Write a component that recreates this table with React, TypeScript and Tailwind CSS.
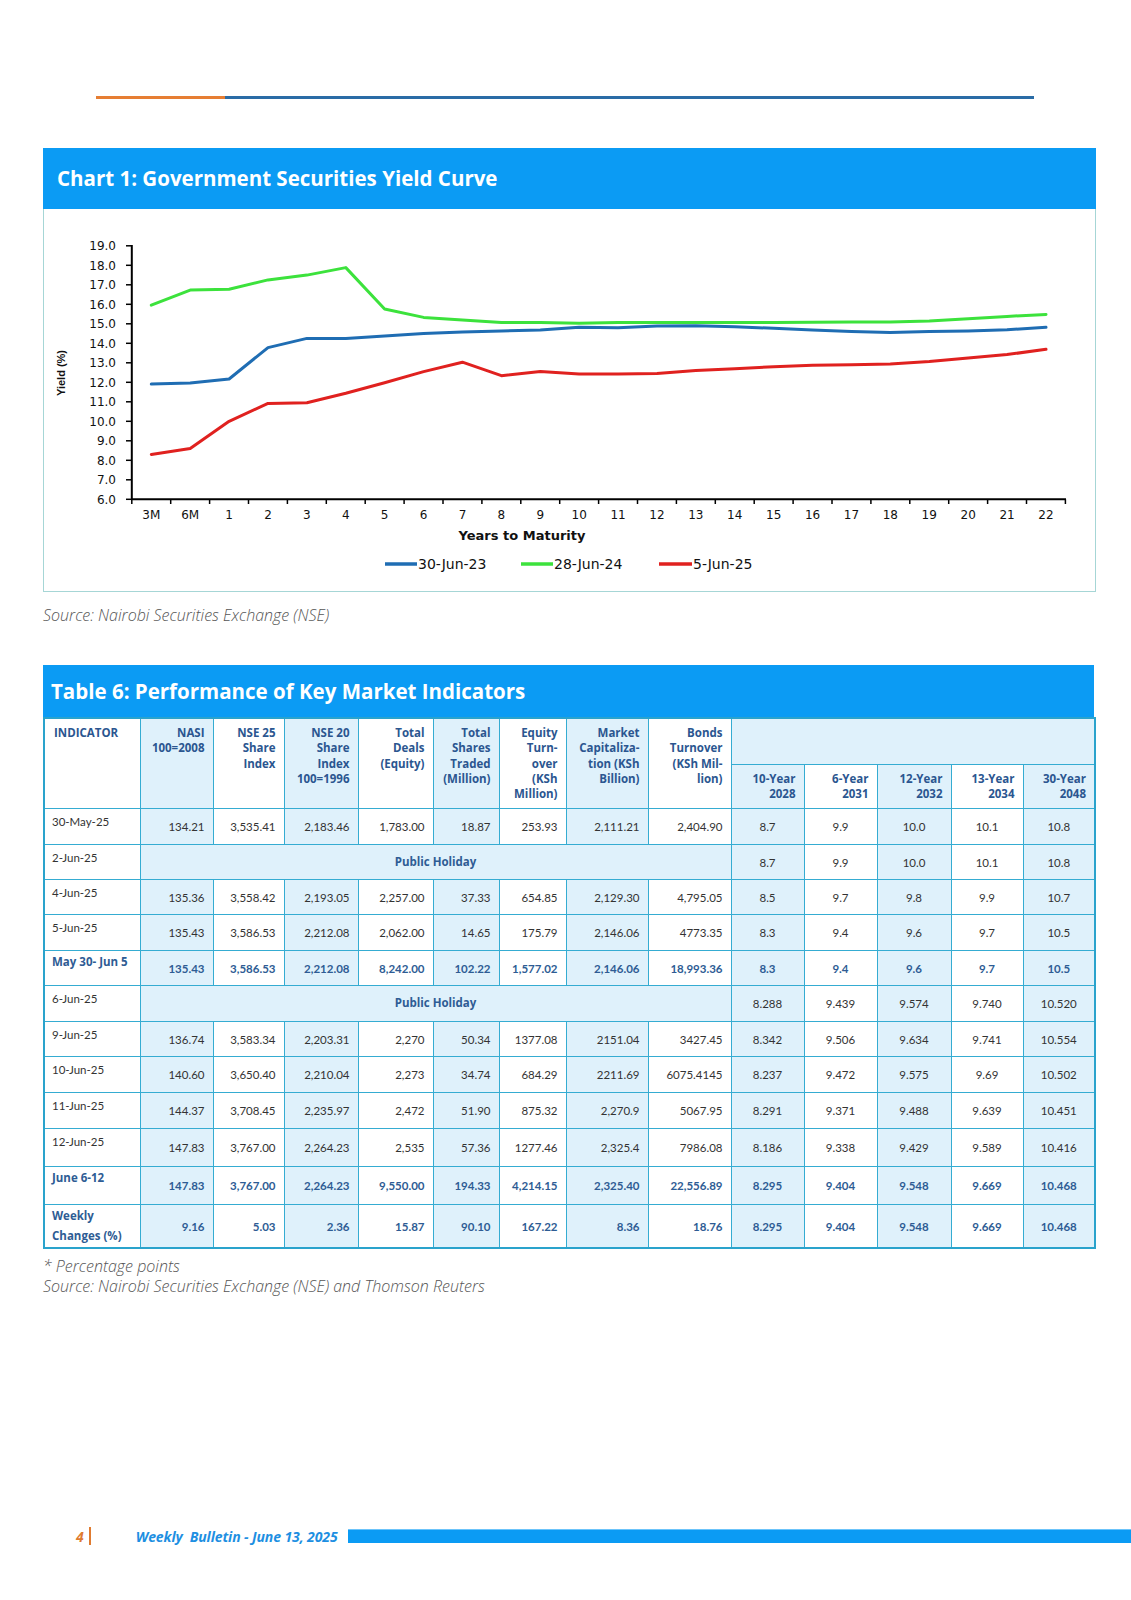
import { FC } from "react";

const cats = ["3M", "6M", ...Array.from({ length: 22 }, (_, i) => String(i + 1))];

const blue = [11.91, 11.96, 12.17, 13.78, 14.25, 14.25, 14.37, 14.5, 14.58, 14.63, 14.68, 14.82, 14.8, 14.88, 14.9, 14.85, 14.77, 14.68, 14.6, 14.55, 14.6, 14.63, 14.7, 14.82];
const green = [15.96, 16.73, 16.77, 17.25, 17.5, 17.88, 15.76, 15.33, 15.2, 15.06, 15.06, 15.03, 15.06, 15.06, 15.06, 15.07, 15.06, 15.08, 15.1, 15.1, 15.15, 15.26, 15.38, 15.48];
const red = [8.3, 8.6, 10.0, 10.92, 10.95, 11.44, 11.98, 12.55, 13.03, 12.34, 12.55, 12.43, 12.43, 12.45, 12.6, 12.7, 12.8, 12.87, 12.9, 12.94, 13.06, 13.25, 13.42, 13.69];

const px = (i: number) => 131.8 + 38.9 * (i + 0.5);
const py = (v: number) => 499.3 - (v - 6) * 19.5;
const pts = (arr: number[]) => arr.map((v, i) => `${px(i).toFixed(1)},${py(v).toFixed(1)}`).join(" ");

const YieldChart: FC = () => {
    const yTicks = Array.from({ length: 14 }, (_, i) => 6 + i);
    return (
        <svg width={1051} height={382} viewBox="44 209 1051 382" className="block" style={{ fontFamily: "'DejaVu Sans', sans-serif" }}>
            {yTicks.map((v) => (
                <g key={v}>
                    <line x1={126} x2={131.8} y1={py(v)} y2={py(v)} stroke="#000" strokeWidth={1.5} />
                    <text x={116} y={py(v)} dy="0.36em" textAnchor="end" fontSize={12} fill="#111">
                        {v.toFixed(1)}
                    </text>
                </g>
            ))}
            {Array.from({ length: 25 }, (_, k) => (
                <line key={k} x1={131.8 + 38.9 * k} x2={131.8 + 38.9 * k} y1={499.3} y2={504} stroke="#000" strokeWidth={1.5} />
            ))}
            <line x1={131.8} x2={131.8} y1={245} y2={500} stroke="#000" strokeWidth={2} />
            <line x1={131} x2={1066} y1={499.3} y2={499.3} stroke="#000" strokeWidth={2} />
            {cats.map((c, i) => (
                <text key={c} x={px(i)} y={515} dy="0.36em" textAnchor="middle" fontSize={12} fill="#111">
                    {c}
                </text>
            ))}
            <text x={522} y={535} dy="0.36em" textAnchor="middle" fontSize={13} fontWeight={700} fill="#111">
                Years to Maturity
            </text>
            <text
                x={61}
                y={373}
                dy="0.36em"
                textAnchor="middle"
                fontSize={11}
                fontWeight={700}
                fill="#111"
                transform="rotate(-90 61 373)"
                style={{ fontFamily: "'Liberation Sans', sans-serif" }}
            >
                Yield (%)
            </text>
            <polyline points={pts(green)} fill="none" stroke="#3ce23c" strokeWidth={3} strokeLinejoin="round" strokeLinecap="round" />
            <polyline points={pts(blue)} fill="none" stroke="#1f6db3" strokeWidth={3} strokeLinejoin="round" strokeLinecap="round" />
            <polyline points={pts(red)} fill="none" stroke="#e0211f" strokeWidth={3} strokeLinejoin="round" strokeLinecap="round" />

            <line x1={385} x2={417} y1={564} y2={564} stroke="#1f6db3" strokeWidth={3.5} />
            <text x={418} y={564} dy="0.36em" fontSize={14} fill="#111">30-Jun-23</text>
            <line x1={521} x2={553} y1={564} y2={564} stroke="#3ce23c" strokeWidth={3.5} />
            <text x={554} y={564} dy="0.36em" fontSize={14} fill="#111">28-Jun-24</text>
            <line x1={659} x2={692} y1={564} y2={564} stroke="#e0211f" strokeWidth={3.5} />
            <text x={693} y={564} dy="0.36em" fontSize={14} fill="#111">5-Jun-25</text>
        </svg>
    );
};

interface Row {
    label: string;
    vals?: string[];
    bonds: string[];
    h: string;
    bold?: boolean;
}

const rows: Row[] = [
    { label: "30-May-25", vals: ["134.21", "3,535.41", "2,183.46", "1,783.00", "18.87", "253.93", "2,111.21", "2,404.90"], bonds: ["8.7", "9.9", "10.0", "10.1", "10.8"], h: "h-[36px]" },
    { label: "2-Jun-25", bonds: ["8.7", "9.9", "10.0", "10.1", "10.8"], h: "h-[35px]" },
    { label: "4-Jun-25", vals: ["135.36", "3,558.42", "2,193.05", "2,257.00", "37.33", "654.85", "2,129.30", "4,795.05"], bonds: ["8.5", "9.7", "9.8", "9.9", "10.7"], h: "h-[35px]" },
    { label: "5-Jun-25", vals: ["135.43", "3,586.53", "2,212.08", "2,062.00", "14.65", "175.79", "2,146.06", "4773.35"], bonds: ["8.3", "9.4", "9.6", "9.7", "10.5"], h: "h-[36px]" },
    { label: "May 30- Jun 5", bold: true, vals: ["135.43", "3,586.53", "2,212.08", "8,242.00", "102.22", "1,577.02", "2,146.06", "18,993.36"], bonds: ["8.3", "9.4", "9.6", "9.7", "10.5"], h: "h-[35px]" },
    { label: "6-Jun-25", bonds: ["8.288", "9.439", "9.574", "9.740", "10.520"], h: "h-[36px]" },
    { label: "9-Jun-25", vals: ["136.74", "3,583.34", "2,203.31", "2,270", "50.34", "1377.08", "2151.04", "3427.45"], bonds: ["8.342", "9.506", "9.634", "9.741", "10.554"], h: "h-[35px]" },
    { label: "10-Jun-25", vals: ["140.60", "3,650.40", "2,210.04", "2,273", "34.74", "684.29", "2211.69", "6075.4145"], bonds: ["8.237", "9.472", "9.575", "9.69", "10.502"], h: "h-[36px]" },
    { label: "11-Jun-25", vals: ["144.37", "3,708.45", "2,235.97", "2,472", "51.90", "875.32", "2,270.9", "5067.95"], bonds: ["8.291", "9.371", "9.488", "9.639", "10.451"], h: "h-[36px]" },
    { label: "12-Jun-25", vals: ["147.83", "3,767.00", "2,264.23", "2,535", "57.36", "1277.46", "2,325.4", "7986.08"], bonds: ["8.186", "9.338", "9.429", "9.589", "10.416"], h: "h-[38px]" },
    { label: "June 6-12", bold: true, vals: ["147.83", "3,767.00", "2,264.23", "9,550.00", "194.33", "4,214.15", "2,325.40", "22,556.89"], bonds: ["8.295", "9.404", "9.548", "9.669", "10.468"], h: "h-[38px]" },
    { label: "Weekly Changes (%)", bold: true, vals: ["9.16", "5.03", "2.36", "15.87", "90.10", "167.22", "8.36", "18.76"], bonds: ["8.295", "9.404", "9.548", "9.669", "10.468"], h: "h-[44px]" },
];

const heads = [
    ["NASI", "100=2008"],
    ["NSE 25", "Share", "Index"],
    ["NSE 20", "Share", "Index", "100=1996"],
    ["Total", "Deals", "(Equity)"],
    ["Total", "Shares", "Traded", "(Million)"],
    ["Equity", "Turn-", "over", "(KSh", "Million)"],
    ["Market", "Capitaliza-", "tion (KSh", "Billion)"],
    ["Bonds", "Turnover", "(KSh Mil-", "lion)"],
];

const bondHeads = [
    ["10-Year", "2028"],
    ["6-Year", "2031"],
    ["12-Year", "2032"],
    ["13-Year", "2034"],
    ["30-Year", "2048"],
];

const colW = ["w-[96px]", "w-[73px]", "w-[71px]", "w-[74px]", "w-[75px]", "w-[66px]", "w-[67px]", "w-[82px]", "w-[83px]", "w-[73px]", "w-[73px]", "w-[74px]", "w-[72px]", "w-[72px]"];

const light = "bg-[#dff1fb]";
const bd = "border border-[#35acd2]";
const headTxt = "font-['Open_Sans',sans-serif] font-bold text-[11.5px] text-[#2b5690] leading-[15.3px]";
const boldLbl = "font-['Open_Sans',sans-serif] font-bold text-[11.5px] text-[#2e5c94]";

const MarketTable: FC = () => (
    <table className="table-fixed border-collapse w-[1051px] text-[11.5px] font-['Lato',sans-serif] border-2 border-[#2aa3cc]">
        <colgroup>
            {colW.map((w, i) => (
                <col key={i} className={w} />
            ))}
        </colgroup>
        <thead>
            <tr className="h-[46px]">
                <td rowSpan={2} className={`${bd} bg-white align-top pl-[9px] pt-[6px] ${headTxt}`}>INDICATOR</td>
                {heads.map((lines, i) => (
                    <td key={i} rowSpan={2} className={`${bd} ${i % 2 === 0 ? light : "bg-white"} align-top text-right pr-[8px] pt-[6px] ${headTxt}`}>
                        {lines.map((l) => (
                            <div key={l}>{l}</div>
                        ))}
                    </td>
                ))}
                <td colSpan={5} className={`${bd} ${light}`} />
            </tr>
            <tr className="h-[44px]">
                {bondHeads.map((lines, i) => (
                    <td key={i} className={`${bd} ${i % 2 === 0 ? light : "bg-white"} align-top text-right pr-[8px] pt-[6px] ${headTxt}`}>
                        {lines.map((l) => (
                            <div key={l}>{l}</div>
                        ))}
                    </td>
                ))}
            </tr>
        </thead>
        <tbody>
            {rows.map((r) => {
                const tone = r.bold ? "font-bold text-[#2e5c94]" : "text-[#333]";
                return (
                    <tr key={r.label} className={r.h}>
                        <td className={`${bd} bg-white align-top pl-[7px] ${r.bold ? `${boldLbl} leading-[20px] pt-[1px]` : "text-[#333] pt-[4px]"}`}>
                            {r.label === "Weekly Changes (%)" ? (
                                <>
                                    <div>Weekly</div>
                                    <div>Changes (%)</div>
                                </>
                            ) : (
                                r.label
                            )}
                        </td>
                        {r.vals ? (
                            r.vals.map((v, i) => (
                                <td key={i} className={`${bd} ${i % 2 === 0 ? light : "bg-white"} text-right pr-[8px] pt-[2px] ${tone}`}>
                                    {v}
                                </td>
                            ))
                        ) : (
                            <td colSpan={8} className={`${bd} ${light} text-center ${boldLbl}`}>
                                Public Holiday
                            </td>
                        )}
                        {r.bonds.map((v, i) => (
                            <td key={i} className={`${bd} ${i % 2 === 0 ? light : "bg-white"} text-center pt-[2px] ${tone}`}>
                                {v}
                            </td>
                        ))}
                    </tr>
                );
            })}
        </tbody>
    </table>
);

export default function App() {
    return (
        <div className="w-[1131px] h-[1600px] bg-white flex flex-col font-['Open_Sans',sans-serif]">
            <div className="mt-[96px] ml-[96px] w-[938px] h-[3px] flex">
                <div className="w-[129px] bg-[#e67e33]" />
                <div className="flex-1 bg-[#2a6ca6]" />
            </div>

            <div className="mt-[49px] ml-[43px] w-[1053px]">
                <div className="h-[61px] bg-[#0b9bf4] flex items-center pl-[14px]">
                    <h2 className="text-white font-bold text-[20.5px] leading-none">Chart 1: Government Securities Yield Curve</h2>
                </div>
                <div className="h-[383px] border border-t-0 border-[#a6d6d6]">
                    <YieldChart />
                </div>
            </div>

            <p className="ml-[43px] mt-[13px] leading-[20px] text-[16px] italic font-light text-[#555]">Source: Nairobi Securities Exchange (NSE)</p>

            <div className="mt-[40px] ml-[43px] w-[1051px]">
                <div className="h-[52px] bg-[#0b9bf4] flex items-center pl-[8px]">
                    <h2 className="text-white font-bold text-[20.5px] leading-none">Table 6: Performance of Key Market Indicators</h2>
                </div>
                <MarketTable />
            </div>

            <div className="ml-[43px] mt-[7px] text-[16px] leading-[20px] italic font-light text-[#555]">
                <p>* Percentage points</p>
                <p>Source: Nairobi Securities Exchange (NSE) and Thomson Reuters</p>
            </div>

            <div className="mt-auto mb-[54px] h-[20px] flex items-center">
                <span className="ml-[76px] text-[14px] font-bold italic text-[#e07b30]">4</span>
                <span className="ml-[5px] w-[2px] h-[18px] bg-[#e07b30]" />
                <span className="ml-[45px] text-[14px] font-bold italic text-[#1d8fe2] whitespace-pre tracking-[-0.1px]">Weekly  Bulletin - June 13, 2025</span>
                <div className="ml-auto w-[783px] h-[14px] bg-[#0b9bf4] border-t-[1.5px] border-[#6cc4fa]" />
            </div>
        </div>
    );
}
